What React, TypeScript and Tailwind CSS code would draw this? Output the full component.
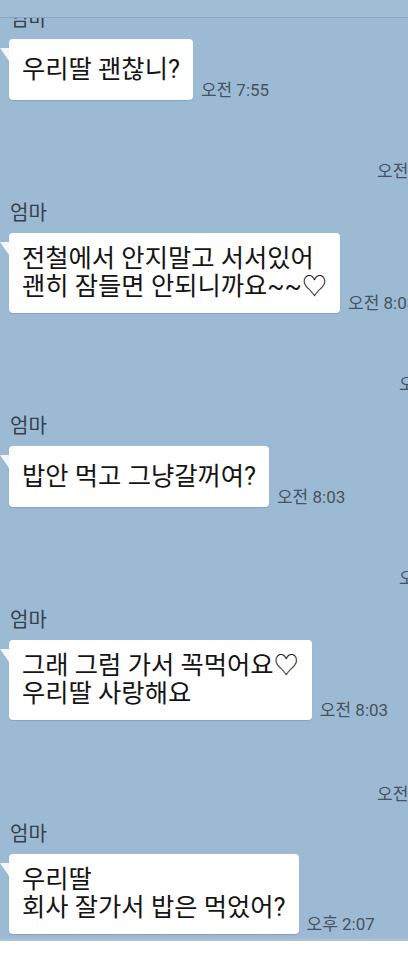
// KakaoTalk-style chat: messages from 엄마, own replies scrolled off to the right.

type Item =
  | { kind: 'in'; lines: string[]; time: string; mt: string }
  | { kind: 'out'; time: string; pad: string; mt: string };

const ITEMS: Item[] = [
  { kind: 'in', lines: ['우리딸 괜찮니?'], time: '오전 7:55', mt: 'mt-[-11px]' },
  { kind: 'out', time: '오전 8:03', pad: 'pl-[377px]', mt: 'mt-[20px]' },
  { kind: 'in', lines: ['전철에서 안지말고 서서있어', '괜히 잠들면 안되니까요~~♡'], time: '오전 8:03', mt: 'mt-[20px]' },
  { kind: 'out', time: '오전 8:03', pad: 'pl-[399px]', mt: 'mt-[20px]' },
  { kind: 'in', lines: ['밥안 먹고 그냥갈꺼여?'], time: '오전 8:03', mt: 'mt-[20px]' },
  { kind: 'out', time: '오전 8:04', pad: 'pl-[399px]', mt: 'mt-[20px]' },
  { kind: 'in', lines: ['그래 그럼 가서 꼭먹어요♡', '우리딸 사랑해요'], time: '오전 8:03', mt: 'mt-[20px]' },
  { kind: 'out', time: '오전 8:05', pad: 'pl-[377px]', mt: 'mt-[23px]' },
  { kind: 'in', lines: ['우리딸', '회사 잘가서 밥은 먹었어?'], time: '오후 2:07', mt: 'mt-[18px]' },
];

const FONT = { fontFamily: 'Roboto, "Noto Sans CJK KR", "Noto Sans", sans-serif' };

function Incoming({ lines, time, mt }: { lines: string[]; time: string; mt: string }) {
  return (
    <div className={`${mt} flex flex-col pl-[9px]`}>
      <div className="pl-px text-[20px] leading-[24px] text-[#36414c]">엄마</div>
      <div className="mt-[8px] flex items-end gap-[8px]">
        <div className="relative">
          {/* tail */}
          <svg className="absolute left-[-9px] top-[9px]" width="9" height="13" viewBox="0 0 9 13">
            <path d="M0 0 L9 0 L9 13 Z" fill="#f4f7fa" />
          </svg>
          <div className="flex min-h-[61px] items-center rounded-[4px] bg-white px-[13px] py-[12px] shadow-[0_1px_1px_rgba(40,60,80,0.18)]">
            <div className="whitespace-pre text-[25.3px] leading-[28px] text-[#141414]">
              {lines.join('\n')}
            </div>
          </div>
        </div>
        <div className="whitespace-nowrap text-[17px] leading-[20px] text-[#46525e]">{time}</div>
      </div>
    </div>
  );
}

function Outgoing({ time, pad, mt }: { time: string; pad: string; mt: string }) {
  return (
    <div className={`${mt} flex h-[61px] items-end overflow-hidden ${pad}`}>
      <div className="whitespace-nowrap text-[17px] leading-[20px] text-[#46525e]">{time}</div>
    </div>
  );
}

export default function App() {
  return (
    <div className="flex h-[960px] w-[408px] flex-col overflow-hidden bg-[#9dbad4]" style={FONT}>
      {/* top bar edge */}
      <div className="h-[18px] shrink-0 border-b border-[#8ba5bc] bg-[#a1bdd6]" />

      {/* messages */}
      <div className="flex h-[921px] shrink-0 flex-col overflow-hidden">
        {ITEMS.map((item, i) =>
          item.kind === 'in' ? (
            <Incoming key={i} lines={item.lines} time={item.time} mt={item.mt} />
          ) : (
            <Outgoing key={i} time={item.time} pad={item.pad} mt={item.mt} />
          ),
        )}
      </div>

      {/* input area edge */}
      <div className="flex-1 border-t-2 border-[#b4c2ce] bg-white" />
    </div>
  );
}
